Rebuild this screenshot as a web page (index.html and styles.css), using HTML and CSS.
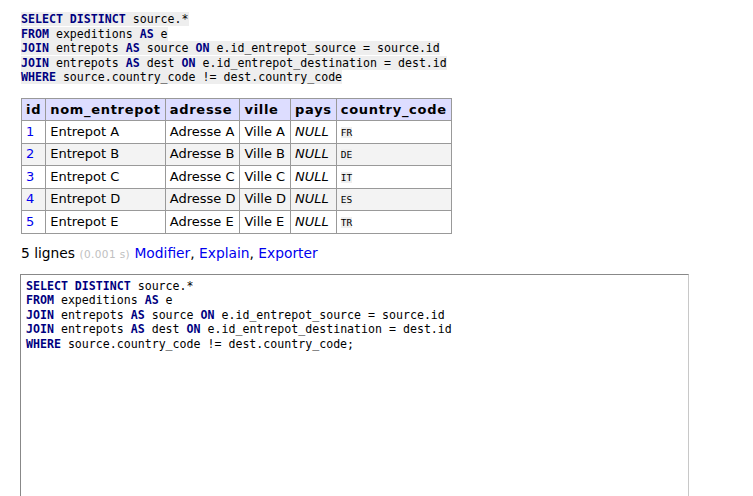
FILE: index.html
```html
<!DOCTYPE html>
<html lang="fr">
<head>
<meta charset="utf-8">
<title>Adminer SQL</title>
<link rel="stylesheet" href="styles.css">
</head>
<body>
<div class="content">
<pre class="sql"><code><b>SELECT DISTINCT</b> source.*
<b>FROM</b> expeditions <b>AS</b> e
<b>JOIN</b> entrepots <b>AS</b> source <b>ON</b> e.id_entrepot_source = source.id
<b>JOIN</b> entrepots <b>AS</b> dest <b>ON</b> e.id_entrepot_destination = dest.id
<b>WHERE</b> source.country_code != dest.country_code</code></pre>
<table class="result">
<thead>
<tr><th>id</th><th>nom_entrepot</th><th>adresse</th><th>ville</th><th>pays</th><th>country_code</th></tr>
</thead>
<tbody>
<tr><td><a href="#">1</a></td><td>Entrepot A</td><td>Adresse A</td><td>Ville A</td><td><i>NULL</i></td><td><code>FR</code></td></tr>
<tr><td><a href="#">2</a></td><td>Entrepot B</td><td>Adresse B</td><td>Ville B</td><td><i>NULL</i></td><td><code>DE</code></td></tr>
<tr><td><a href="#">3</a></td><td>Entrepot C</td><td>Adresse C</td><td>Ville C</td><td><i>NULL</i></td><td><code>IT</code></td></tr>
<tr><td><a href="#">4</a></td><td>Entrepot D</td><td>Adresse D</td><td>Ville D</td><td><i>NULL</i></td><td><code>ES</code></td></tr>
<tr><td><a href="#">5</a></td><td>Entrepot E</td><td>Adresse E</td><td>Ville E</td><td><i>NULL</i></td><td><code>TR</code></td></tr>
</tbody>
</table>
<p class="summary">5 lignes <span class="time">(0.001 s)</span> <a href="#">Modifier</a>, <a href="#">Explain</a>, <a href="#">Exporter</a></p>
<div class="sqlarea" contenteditable="true" spellcheck="false"><pre class="sqledit"><b>SELECT DISTINCT</b> source.*
<b>FROM</b> expeditions <b>AS</b> e
<b>JOIN</b> entrepots <b>AS</b> source <b>ON</b> e.id_entrepot_source = source.id
<b>JOIN</b> entrepots <b>AS</b> dest <b>ON</b> e.id_entrepot_destination = dest.id
<b>WHERE</b> source.country_code != dest.country_code;</pre></div>
</div>
</body>
</html>
```
FILE: styles.css
```css
html, body {
  margin: 0;
  padding: 0;
  background: #fff;
}
body {
  font-family: "DejaVu Sans", Verdana, sans-serif;
  font-size: 13px;
  line-height: 1.25;
  color: #000;
}
.content {
  padding: 12px 0 0 21px;
}
a {
  color: #0000ee;
  text-decoration: none;
}
.sql {
  margin: 0;
  font-family: "DejaVu Sans Mono", monospace;
  font-size: 11.6px;
  line-height: 14.6px;
}
.sql code {
  background: #eee;
  font-family: inherit;
}
.sql b, .sqledit b {
  color: #000080;
  font-weight: bold;
}
.result {
  margin-top: 13px;
  border-collapse: collapse;
}
.result th, .result td {
  border: 1px solid #999;
  padding: 2.6px 4px;
  text-align: left;
  white-space: nowrap;
}
.result th {
  background: #ddf;
  font-weight: bold;
  letter-spacing: 0.7px;
}
.result tbody tr:nth-child(even) {
  background: #f3f3f3;
}
.result i {
  font-style: italic;
}
.result code {
  font-family: "DejaVu Sans Mono", monospace;
  font-size: 9.5px;
  background: #eee;
}
.summary {
  margin: 11px 0 0 0;
  font-size: 13.8px;
  line-height: 17px;
}
.time {
  color: silver;
  font-size: 10.5px;
  letter-spacing: 0.4px;
}
.sqlarea {
  margin: 11px 0 0 -1px;
  width: 669px;
  height: 240px;
  box-sizing: border-box;
  padding: 4px 5px;
  border-style: solid;
  border-width: 1px;
  border-color: #888 #c8c8c8 #c8c8c8 #888;
  outline: none;
}
.sqledit {
  margin: 0;
  font-family: "DejaVu Sans Mono", monospace;
  font-size: 11.6px;
  line-height: 14.6px;
  color: #000;
}
```
